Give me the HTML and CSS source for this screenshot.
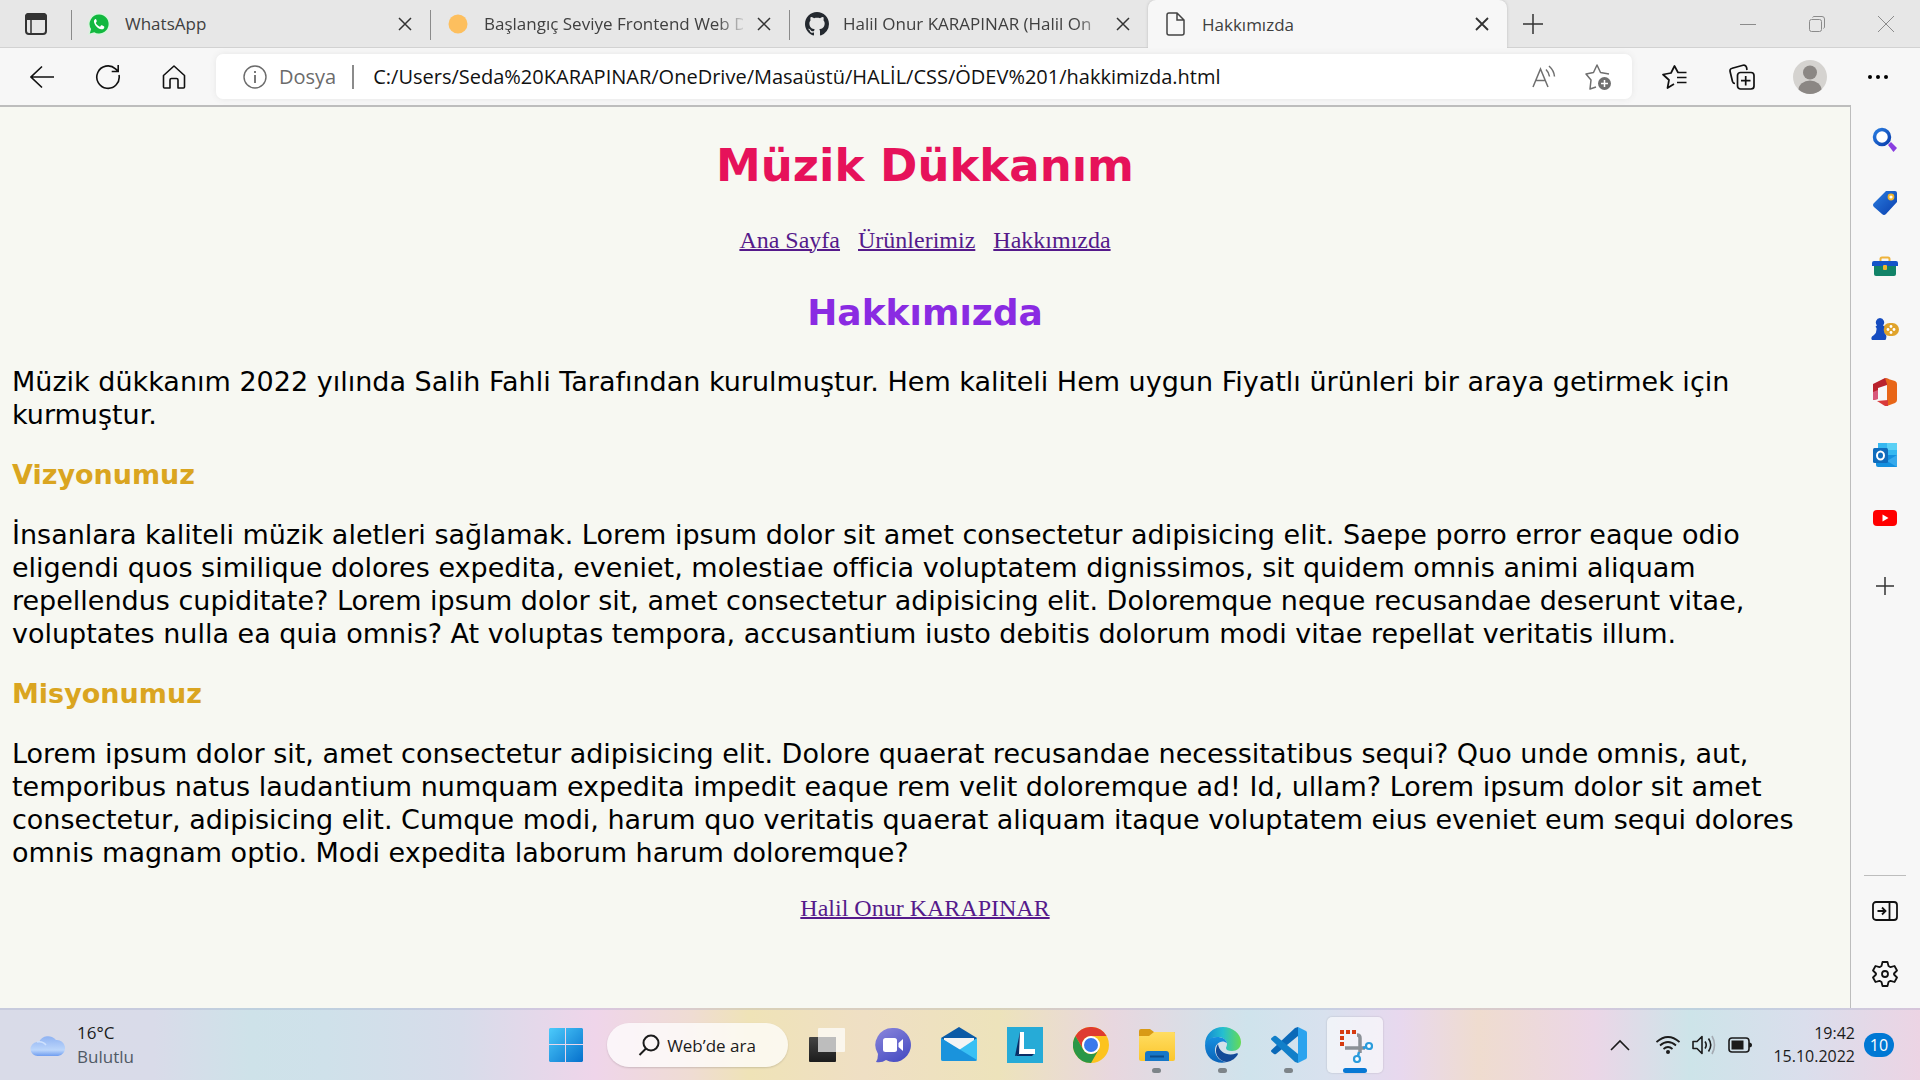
FILE: index.html
```html
<!DOCTYPE html>
<html lang="tr">
<head>
<meta charset="utf-8">
<title>Hakkımızda</title>
<link rel="stylesheet" href="styles.css">
</head>
<body>
<header class="tabbar">
  <button class="tab-actions" aria-label="Sekme eylemleri"><svg width="24" height="24" viewBox="0 0 24 24" fill="none" stroke="#333" stroke-width="2"><rect x="2" y="2" width="20" height="20" rx="3"/><path d="M2 5a3 3 0 0 1 3-3h14a3 3 0 0 1 3 3v2H2z" fill="#333"/><path d="M7 7v15" stroke-width="1.5"/></svg></button>
  <nav class="tabs" aria-label="Sekmeler">
    <div class="tab">
      <svg width="24" height="24" viewBox="0 0 24 24"><path d="M12 1a11 11 0 0 1 0 22c-2 0-4-.5-5.500-1.500L1 23l1.700-5.300A11 11 0 0 1 12 1z" fill="#d8f5dd"/><path d="M12.200 2.500a9.500 9.500 0 1 1-4.900 17.700L2.800 21.400l1.300-4.300A9.500 9.500 0 0 1 12.200 2.500z" fill="#12b83f"/><path d="M8.500 7c-1 .3-1.800 1.500-1.500 3 .7 3.500 4 6.800 7.300 7.300 1.500.2 2.700-.6 3-1.900.1-.6 0-.9-.5-1.200l-1.800-.9c-.5-.2-.8-.1-1.100.3l-.6.8c-.3.300-.6.300-1 .1-1.500-.7-2.700-1.800-3.400-3.200-.2-.4-.1-.6.200-.9l.5-.7c.2-.3.200-.6.100-.9L9.200 7.500c-.2-.4-.4-.5-.7-.5z" fill="#fff"/></svg>
      <button class="tab-title">WhatsApp</button>
      <button class="tab-close" aria-label="Kapat"><svg width="14" height="14" viewBox="0 0 14 14" stroke="#333" stroke-width="1.500"><path d="M1 1l12 12M13 1L1 13"/></svg></button>
    </div>
    <div class="tab">
      <svg width="24" height="24" viewBox="0 0 24 24"><circle cx="12" cy="12" r="9.500" fill="#fdbf5e"/></svg>
      <button class="tab-title tab-title-long">Başlangıç Seviye Frontend Web D</button>
      <button class="tab-close" aria-label="Kapat"><svg width="14" height="14" viewBox="0 0 14 14" stroke="#333" stroke-width="1.500"><path d="M1 1l12 12M13 1L1 13"/></svg></button>
    </div>
    <div class="tab">
      <svg width="24" height="24" viewBox="0 0 16 16"><path fill="#24292f" d="M8 0C3.580 0 0 3.580 0 8c0 3.540 2.290 6.530 5.470 7.590.4.070.55-.17.55-.38 0-.19-.01-.82-.01-1.490-2.010.37-2.530-.49-2.690-.94-.09-.23-.48-.94-.82-1.130-.28-.15-.68-.52-.01-.53.63-.01 1.080.58 1.230.82.72 1.210 1.870.87 2.330.66.070-.52.28-.87.51-1.070-1.780-.2-3.640-.89-3.640-3.950 0-.87.31-1.590.82-2.150-.08-.2-.36-1.020.08-2.120 0 0 .67-.21 2.200.82.640-.18 1.320-.27 2-.27s1.360.09 2 .27c1.530-1.040 2.200-.82 2.200-.82.44 1.100.16 1.920.08 2.120.51.56.82 1.270.82 2.150 0 3.070-1.870 3.750-3.650 3.950.29.25.54.73.54 1.480 0 1.070-.01 1.930-.01 2.200 0 .21.15.46.55.38A8.010 8.010 0 0 0 16 8c0-4.420-3.580-8-8-8z"/></svg>
      <button class="tab-title tab-title-long">Halil Onur KARAPINAR (Halil On</button>
      <button class="tab-close" aria-label="Kapat"><svg width="14" height="14" viewBox="0 0 14 14" stroke="#333" stroke-width="1.500"><path d="M1 1l12 12M13 1L1 13"/></svg></button>
    </div>
    <div class="tab tab-active">
      <svg width="24" height="24" viewBox="0 0 24 24" fill="none" stroke="#444" stroke-width="1.500"><path d="M5 1h8l7 7v13a2 2 0 0 1-2 2H5a2 2 0 0 1-2-2V3a2 2 0 0 1 2-2zM13 1v7h7"/></svg>
      <button class="tab-title">Hakkımızda</button>
      <button class="tab-close" aria-label="Kapat"><svg width="14" height="14" viewBox="0 0 14 14" stroke="#333" stroke-width="1.800"><path d="M1 1l12 12M13 1L1 13"/></svg></button>
    </div>
    <button class="new-tab" aria-label="Yeni sekme"><svg width="22" height="22" viewBox="0 0 22 22" stroke="#333" stroke-width="1.500"><path d="M11 1v20M1 11h20"/></svg></button>
  </nav>
  <div class="window-buttons">
    <button aria-label="Simge durumuna küçült"><svg width="16" height="16" viewBox="0 0 16 16" stroke="#8b8b8b"><path d="M0 8.500h16"/></svg></button>
    <button aria-label="Önceki boyut"><svg width="16" height="16" viewBox="0 0 16 16" fill="none" stroke="#8b8b8b"><rect x=".5" y="3.500" width="12" height="12" rx="2"/><path d="M3.500 1.500a2 2 0 0 1 1.500-1h8a2.500 2.500 0 0 1 2.500 2.500v8a2 2 0 0 1-1 1.500"/></svg></button>
    <button aria-label="Pencereyi kapat"><svg width="16" height="16" viewBox="0 0 16 16" stroke="#8b8b8b"><path d="M0 0l16 16M16 0L0 16"/></svg></button>
  </div>
</header>

<div class="toolbar">
  <button class="tool" aria-label="Geri"><svg width="24" height="24" viewBox="0 0 24 24" fill="none" stroke="#111" stroke-width="1.600"><path d="M24 12H1M12 1.500L1 12l11 10.500"/></svg></button>
  <button class="tool" aria-label="Yenile"><svg width="26" height="26" viewBox="0 0 26 26" fill="none" stroke="#111" stroke-width="1.600"><path d="M24 11a11.200 11.200 0 1 1-3.500-6.200L23 7.200M23.200 1v6.500h-6.500"/></svg></button>
  <button class="tool" aria-label="Giriş"><svg width="24" height="24" viewBox="0 0 24 24" fill="none" stroke="#111" stroke-width="1.600" stroke-linejoin="round"><path d="M1.500 10.500L12 1l10.500 9.500V22a1 1 0 0 1-1 1H16v-8a1.500 1.500 0 0 0-1.500-1.500h-5A1.500 1.500 0 0 0 8 15v8H2.500a1 1 0 0 1-1-1z"/></svg></button>
  <div class="address">
    <svg width="24" height="24" viewBox="0 0 24 24" fill="none" stroke="#6b6b6b" stroke-width="1.400"><circle cx="12" cy="12" r="11"/><path d="M12 10v8M12 6v2" stroke-width="1.800"/></svg>
    <label class="scheme" for="url">Dosya</label>
    <input class="url" id="url" type="text" value="C:/Users/Seda%20KARAPINAR/OneDrive/Masaüstü/HALİL/CSS/ÖDEV%201/hakkimizda.html">
    <button class="address-button" aria-label="Sesli oku"><svg width="24" height="24" viewBox="0 0 24 24" fill="none" stroke="#6f6f6f" stroke-width="1.500"><path d="M1 22L8.500 4 16 22M4 15.500h9M14 4.500q3 3 3.500 7M17 1q5 4.500 5.500 10.500"/></svg></button>
    <button class="address-button" aria-label="Sık kullanılanlara ekle"><svg width="26" height="26" viewBox="0 0 26 26" fill="none" stroke="#6f6f6f" stroke-width="1.500" stroke-linejoin="round"><path d="M11 23l-6 2 1-9-5-6 7.500-1.500L12 1l3.500 7.500L24 10"/><circle cx="19.500" cy="19.500" r="6.500" fill="#6f6f6f" stroke="none"/><path d="M19.500 16v7M16 19.500h7" stroke="#fff"/></svg></button>
  </div>
  <div class="toolbar-end">
    <button class="tool" aria-label="Sık kullanılanlar"><svg width="25" height="24" viewBox="0 0 25 24" fill="none" stroke="#111" stroke-width="1.700" stroke-linejoin="round"><path d="M12 19l-6.500 4L7 15 1 9.500 9 8l3.500-7L16 7.500h8.500M15 12.500h9.500M15 17.500h9.500"/></svg></button>
    <button class="tool" aria-label="Koleksiyonlar"><svg width="26" height="26" viewBox="0 0 26 26" fill="none" stroke="#111" stroke-width="1.700"><path d="M6 19.500c-1.500 0-2-.5-2.500-2L1.200 8c-.5-2 0-3.300 2-3.800L14 1.200c2-.5 3 .3 3.500 2L18 6"/><rect x="8.500" y="8.500" width="16.500" height="16.500" rx="3"/><path d="M16.700 12v9.500M12 16.700h9.500"/></svg></button>
    <button class="tool" aria-label="Profil"><svg width="34" height="34" viewBox="0 0 34 34"><circle cx="17" cy="17" r="17" fill="#d5d3d0"/><circle cx="17" cy="12.500" r="7" fill="#8b8784"/><path d="M5.500 29.500a11.500 9 0 0 1 23 0A17 17 0 0 1 5.500 29.500z" fill="#8b8784"/></svg></button>
    <button class="tool" aria-label="Ayarlar ve daha fazlası"><svg width="20" height="4" viewBox="0 0 20 4"><circle cx="2" cy="2" r="2"/><circle cx="10" cy="2" r="2"/><circle cx="18" cy="2" r="2"/></svg></button>
  </div>
</div>

<div class="workspace">
  <main class="page">
    <h1 class="site-title">Müzik Dükkanım</h1>
    <nav class="site-nav"><a href="#ana">Ana Sayfa</a><a href="#urunler">Ürünlerimiz</a><a href="#hakkimizda">Hakkımızda</a></nav>
    <h2 class="page-title">Hakkımızda</h2>
    <p>Müzik dükkanım 2022 yılında Salih Fahli Tarafından kurulmuştur. Hem kaliteli Hem uygun Fiyatlı ürünleri bir araya getirmek için kurmuştur.</p>
    <h3>Vizyonumuz</h3>
    <p>İnsanlara kaliteli müzik aletleri sağlamak. Lorem ipsum dolor sit amet consectetur adipisicing elit. Saepe porro error eaque odio eligendi quos similique dolores expedita, eveniet, molestiae officia voluptatem dignissimos, sit quidem omnis animi aliquam repellendus cupiditate? Lorem ipsum dolor sit, amet consectetur adipisicing elit. Doloremque neque recusandae deserunt vitae, voluptates nulla ea quia omnis? At voluptas tempora, accusantium iusto debitis dolorum modi vitae repellat veritatis illum.</p>
    <h3>Misyonumuz</h3>
    <p>Lorem ipsum dolor sit, amet consectetur adipisicing elit. Dolore quaerat recusandae necessitatibus sequi? Quo unde omnis, aut, temporibus natus laudantium numquam expedita impedit eaque rem velit doloremque ad! Id, ullam? Lorem ipsum dolor sit amet consectetur, adipisicing elit. Cumque modi, harum quo veritatis quaerat aliquam itaque voluptatem eius eveniet eum sequi dolores omnis magnam optio. Modi expedita laborum harum doloremque?</p>
    <footer class="site-footer"><a href="#yazar">Halil Onur KARAPINAR</a></footer>
  </main>

  <aside class="sidebar">
    <button aria-label="Ara"><svg width="26" height="26" viewBox="0 0 26 26"><defs><linearGradient id="lens" x2="1" y2="1"><stop stop-color="#2a7de0"/><stop offset="1" stop-color="#0a3fae"/></linearGradient></defs><path d="M16 18l3-3 6 6-3.500 4z" fill="#8a3ee0"/><circle cx="10" cy="10" r="7.500" fill="#fff" stroke="url(#lens)" stroke-width="3.500"/></svg></button>
    <button aria-label="Alışveriş"><svg width="26" height="26" viewBox="0 0 26 26"><path d="M14 1h9q2 0 2 2v9L14 24q-2 2-4 0l-8-7q-2-2 0-4z" fill="url(#lens)"/><circle cx="19" cy="7" r="2.500" fill="#fff" stroke="#f0b52f" stroke-width="1.800"/></svg></button>
    <button aria-label="Araçlar"><svg width="26" height="26" viewBox="0 0 26 26"><path d="M8.500 10V6q0-1.500 1.500-1.500h6q1.500 0 1.500 1.500v4" fill="none" stroke="#efb43c" stroke-width="2"/><path d="M2 11h22v10q0 2-2 2H4q-2 0-2-2z" fill="#128368"/><path d="M0 10q0-2 2-2h22q2 0 2 2v3H0z" fill="#1554c9"/><rect x="11" y="12" width="4" height="5" rx="1" fill="#f0b52f"/></svg></button>
    <button aria-label="Oyunlar"><svg width="28" height="24" viewBox="0 0 28 24"><rect x="12" y="6" width="16" height="13" rx="6.500" fill="#e0a32b"/><g fill="#fff"><circle cx="20" cy="9.500" r="1.400"/><circle cx="20" cy="15.500" r="1.400"/><circle cx="17" cy="12.500" r="1.400"/><circle cx="23" cy="12.500" r="1.400"/></g><path d="M9 1a4.500 4.500 0 0 1 3 7.500q2 .5 1 2.500-1 4 2 7 1 2-.5 5H1q-2-3 2-5 3-2 2.500-7-2-1.500.5-2.500A4.500 4.500 0 0 1 9 1z" fill="#164cc0"/></svg></button>
    <button aria-label="Office"><svg width="26" height="28" viewBox="0 0 26 28"><path d="M1 6L13 0l4 1-2 6-9 3v11l-5 1z" fill="#b9222c"/><path d="M1 14l5-2v9l-5 1z" fill="#d8587b"/><path d="M13 0l10 3q2 1 2 3v16q0 2-2 3l-8 3V6z" fill="#e86618"/><path d="M5 23l11-1v6h-3z" fill="#d93a3b"/></svg></button>
    <button aria-label="Outlook"><svg width="26" height="26" viewBox="0 0 26 26"><path d="M6 1h17q2 0 2 2v12H6z" fill="#35b8f1"/><path d="M15 1h10v7H15z" fill="#5bd0f5"/><path d="M4 13h21v12H6q-2 0-2-2z" fill="#1490df"/><path d="M25 13v12l-10-6z" fill="#36a9ec"/><rect x="1" y="6" width="15" height="15" rx="1.500" fill="#0f6cbd"/><ellipse cx="8.500" cy="13.500" rx="3.500" ry="4" fill="none" stroke="#fff" stroke-width="2"/></svg></button>
    <button aria-label="YouTube"><svg width="26" height="26" viewBox="0 0 26 26"><rect x="1" y="5" width="24" height="16" rx="4" fill="#f00"/><path d="M10.500 9.500v7l6-3.500z" fill="#fff"/></svg></button>
    <button class="sidebar-add" aria-label="Ekle"><svg width="20" height="20" viewBox="0 0 20 20" stroke="#333" stroke-width="1.500"><path d="M10 1v18M1 10h18"/></svg></button>
    <hr class="sidebar-rule">
    <button aria-label="Kenar çubuğunu gizle"><svg width="26" height="20" viewBox="0 0 26 20" fill="none" stroke="#111" stroke-width="1.800"><rect x="1" y="1" width="24" height="18" rx="3"/><path d="M17.500 1v18M5.500 10h8M10 6.500l3.500 3.500-3.500 3.500"/></svg></button>
    <button aria-label="Kenar çubuğu ayarları"><svg width="26" height="26" viewBox="0 0 26 26" fill="none" stroke="#111" stroke-width="1.800" stroke-linejoin="round"><path d="M10.500 1h5l1 4 2 1.200 4-1.200 2.500 4.500-3 3v1l3 3-2.500 4.500-4-1.200-2 1.200-1 4h-5l-1-4-2-1.200-4 1.200L1 16.500l3-3v-1l-3-3L3.500 5l4 1.200 2-1.200z"/><circle cx="13" cy="13" r="3"/></svg></button>
  </aside>
</div>

<footer class="taskbar">
  <button class="weather">
    <svg width="36" height="24" viewBox="0 0 36 24"><defs><linearGradient id="sky" x2="0" y2="1"><stop stop-color="#8fb2f2"/><stop offset=".7" stop-color="#bcd6fb"/><stop offset="1" stop-color="#6f9df0"/></linearGradient></defs><path d="M8 23a7 7 0 0 1-1-14h2a10 10 0 0 1 17-2 8 8 0 0 1 2 16z" fill="url(#sky)"/><path d="M7 9q6-1 9 3" fill="none" stroke="#cfe1fd" stroke-width="1.500"/></svg>
    <span class="weather-text"><span class="degrees">16°C</span><span class="condition">Bulutlu</span></span>
  </button>
  <nav class="apps" aria-label="Görev çubuğu">
    <button class="app" aria-label="Başlat"><svg width="36" height="36" viewBox="0 0 36 36"><defs><linearGradient id="win" x2="1" y2="1"><stop stop-color="#4ccbfb"/><stop offset="1" stop-color="#0670cc"/></linearGradient></defs><path d="M2 1h15v16H1V2zM18 1h16l1 1v15H18zM1 18h16v17H2l-1-1zM18 18h17v16l-1 1H18z" fill="url(#win)"/></svg></button>
    <button class="search"><svg width="22" height="22" viewBox="0 0 22 22" fill="none" stroke="#1b1b1b" stroke-width="2"><circle cx="13" cy="9" r="7.500"/><path d="M8 14.500L1.500 21"/></svg>Web’de ara</button>
    <button class="app" aria-label="Görev görünümü"><svg width="36" height="36" viewBox="0 0 36 36"><defs><linearGradient id="dark" x2="0" y2="1"><stop stop-color="#444"/><stop offset="1" stop-color="#1c1c1c"/></linearGradient></defs><rect y="10" width="27" height="25" rx="1" fill="url(#dark)"/><rect x="9" y="1" width="27" height="24" rx="1" fill="#fff" fill-opacity=".7"/><path d="M9 10h18v15H9z" fill="#bdbdbd"/></svg></button>
    <button class="app" aria-label="Sohbet"><svg width="36" height="36" viewBox="0 0 36 36"><defs><linearGradient id="chat" x2=".6" y2="1"><stop stop-color="#8b87dc"/><stop offset="1" stop-color="#4b50c4"/></linearGradient></defs><path d="M18 1a17 17 0 1 1-7 32q-4 3-10 2 2-3 2-8A17 17 0 0 1 18 1z" fill="url(#chat)"/><rect x="8" y="11" width="14" height="14" rx="2.500" fill="#fff"/><path d="M23.500 16l4.500-4v12l-4.500-4z" fill="#fff"/></svg></button>
    <button class="app" aria-label="Posta"><svg width="36" height="36" viewBox="0 0 36 36"><path d="M0 11L18 0l18 11v8H0z" fill="#0b5aa6"/><path d="M3 11h30v12H3z" fill="#f4f4f4"/><path d="M0 11l18 12 18-12v21q0 2-2 2H2q-2 0-2-2z" fill="#39c0f4"/><path d="M0 11l36 22q-1 1-2 1H2q-2 0-2-2z" fill="#1a93dc"/></svg></button>
    <button class="app" aria-label="L"><svg width="36" height="36" viewBox="0 0 36 36"><path d="M0 0h36v36H0z" fill="#26abd7"/><path d="M13 5v22l-5 2z" fill="#0a2d66"/><path d="M13 27h14l-2 2H8z" fill="#0a2d66"/><path d="M13 5h4v17h11v5H12z" fill="#fff"/></svg></button>
    <button class="app" aria-label="Chrome"><svg width="36" height="36" viewBox="0 0 36 36"><circle cx="18" cy="18" r="18" fill="#fcc31e"/><path d="M2.400 9A18 18 0 0 1 33.600 9H18a9 9 0 0 0-7.800 13.500z" fill="#df3b30"/><path d="M2.400 9A18 18 0 0 0 18 36l7.800-13.500A9 9 0 0 1 10.200 22.500z" fill="#2a9746"/><circle cx="18" cy="18" r="9" fill="#fff"/><circle cx="18" cy="18" r="7" fill="#3979ec"/></svg></button>
    <button class="app app-running" aria-label="Dosya Gezgini"><svg width="36" height="36" viewBox="0 0 36 36"><defs><linearGradient id="folder" x2="0" y2="1"><stop stop-color="#ffdd62"/><stop offset="1" stop-color="#fbc62c"/></linearGradient></defs><path d="M0 4q0-2 2-2h9l4 3h20l1 1v5H0z" fill="#d99a16"/><path d="M0 9h10l5-4h20l1 1v26q0 2-2 2H2q-2 0-2-2z" fill="url(#folder)"/><path d="M6 34V27q0-3 3-3h18q3 0 3 3v7z" fill="#1677c8"/><path d="M11 29.500h14" stroke="#0b4c8b" stroke-width="2"/></svg></button>
    <button class="app app-running" aria-label="Edge"><svg width="36" height="36" viewBox="0 0 36 36"><defs><linearGradient id="edge-top" x1="0" x2="1"><stop stop-color="#1487d4"/><stop offset=".5" stop-color="#25bfd0"/><stop offset="1" stop-color="#65db55"/></linearGradient><linearGradient id="edge-side" x2="0" y2="1"><stop stop-color="#168fe0"/><stop offset="1" stop-color="#0b63b8"/></linearGradient></defs><path d="M0 18C0 7 8 0 18 0s18 7 18 15c0 6-4 9-9 9-4 0-6-1-6-3 0-1 1-2 1-4 0-4-4-7-9-7C7 10 2 13 0 18z" fill="url(#edge-top)"/><path d="M0 18c1-5 6-8 12-8 5 0 9 2 10 6-5-4-12 0-12 7 0 7 6 12 12 12C12 38 0 32 0 18z" fill="url(#edge-side)"/><path d="M13 17c-5 8 0 17 9 18 5-1 9-4 11-8 0-1-1-1-2-.5-8 3-17-1-18-9.500z" fill="#134a98"/></svg></button>
    <button class="app app-running" aria-label="Visual Studio Code"><svg width="36" height="36" viewBox="0 0 36 36"><path d="M27 9L5 27q-1 .5-2 0l-2.500-2q-1-1 0-2L24 1l3-1z" fill="#0b69b8"/><path d="M27 27L5 9q-1-.5-2 0L.5 11q-1 1 0 2L24 35l3 1z" fill="#127fc9"/><path d="M27 0l8 4q1 .5 1 2v24q0 1.500-1 2l-8 4z" fill="#2ba3ee"/></svg></button>
    <button class="app app-active app-running" aria-label="Ekran Alıntısı Aracı"><svg width="36" height="36" viewBox="0 0 36 36"><path d="M3 5h17M5 3v17" fill="none" stroke="#d63a10" stroke-width="4" stroke-dasharray="4 2"/><path d="M20 8q3 0 3 3v15M8 21h20" fill="none" stroke="#8b9096" stroke-width="3.500"/><circle cx="32" cy="19" r="3" fill="#fff" stroke="#2a9bdc" stroke-width="2.200"/><circle cx="20" cy="32" r="3" fill="#fff" stroke="#2a9bdc" stroke-width="2.200"/><path d="M26 21l4-1M22 25l-1 4" stroke="#2a9bdc" stroke-width="2.500"/></svg></button>
  </nav>
  <div class="tray">
    <button class="tray-more" aria-label="Gizli simgeler"><svg width="20" height="12" viewBox="0 0 20 12" fill="none" stroke="#1b1b1b" stroke-width="1.600"><path d="M1 11l9-9 9 9"/></svg></button>
    <button class="tray-status" aria-label="Ağ, ses ve pil">
      <svg width="24" height="20" viewBox="0 0 24 20" fill="none" stroke="#1b1b1b" stroke-width="1.700"><path d="M.5 7q11.500-10 23 0M4 10.500q8-7 16 0M7.500 14q4.500-4 9 0"/><circle cx="12" cy="17" r="2" fill="#1b1b1b" stroke="none"/></svg>
      <svg width="24" height="20" viewBox="0 0 24 20" fill="none" stroke="#1b1b1b" stroke-width="1.600" stroke-linejoin="round"><path d="M1 6.500h4l5-5v17l-5-5H1zM13 6.500q2.500 3.500 0 7M16.500 3.500q4.500 6.500 0 13"/><path d="M20 1q5 9 0 18" stroke="#a5abb3"/></svg>
      <svg width="24" height="20" viewBox="0 0 24 20" fill="none" stroke="#1b1b1b" stroke-width="1.600"><rect x="1" y="3" width="20" height="14" rx="3"/><path d="M3.500 5.500h12v9h-12z" fill="#1b1b1b" stroke="none"/><path d="M21 7.500q3 0 3 2.500t-3 2.500z" fill="#1b1b1b" stroke="none"/></svg>
    </button>
    <button class="clock"><time>19:42</time><time>15.10.2022</time></button>
    <button class="badge" aria-label="10 bildirim">10</button>
  </div>
</footer>
</body>
</html>
```
FILE: styles.css
```css
* { box-sizing: border-box; }
body {
  margin: 0;
  min-height: 100vh;
  display: flex;
  flex-direction: column;
  background: #f7f7f7;
  font-family: "Open Sans", "Noto Sans", sans-serif;
  font-size: 17px;
  color: #1b1b1b;
}
button {
  margin: 0;
  padding: 0;
  border: 0;
  background: none;
  color: inherit;
  font: inherit;
  display: flex;
  align-items: center;
  justify-content: center;
  flex: none;
}
svg { display: block; flex: none; }

/* Tab strip */
.tabbar {
  display: flex;
  height: 48px;
  background: #e7e7e7;
  border-bottom: 1px solid #d2d2d2;
}
.tab-actions { width: 71px; }
.tabs { flex: 1; min-width: 0; display: flex; }
.tab {
  flex: 0 1 359px;
  min-width: 0;
  display: flex;
  align-items: center;
  gap: 14px;
  padding: 0 18px 0 16px;
  background: linear-gradient(#8b8b8b, #8b8b8b) 0 10px / 1px 30px no-repeat;
}
.tab-title {
  flex: 1;
  min-width: 0;
  overflow: hidden;
  white-space: nowrap;
  justify-content: flex-start;
  color: #404040;
}
.tab-title-long { mask-image: linear-gradient(to right, #000 90%, rgb(0 0 0 / 15%)); }
.tab-close { width: 14px; }
.tab-active {
  height: 48px;
  background: #f7f7f7;
  border-radius: 8px 8px 0 0;
  box-shadow: 0 0 3px #bbb;
  clip-path: inset(0 -4px 0 -4px);
}
.new-tab { width: 52px; }
.window-buttons { display: flex; }
.window-buttons button { width: 69px; }

/* Address row */
.toolbar {
  display: flex;
  align-items: center;
  height: 57px;
  padding-left: 9px;
}
.tool { width: 66px; height: 44px; }
.address {
  flex: 1;
  min-width: 0;
  height: 45px;
  margin-left: 9px;
  padding: 0 7px 0 27px;
  display: flex;
  align-items: center;
  background: #fff;
  border-radius: 7px;
  box-shadow: 0 0 6px #e6e6e6;
  font-size: 20px;
}
.scheme {
  margin-left: 12px;
  padding-right: 16px;
  border-right: 2px solid #8b8b8b;
  line-height: 24px;
  color: #6b6b6b;
}
.url {
  flex: 1;
  min-width: 0;
  padding: 0 0 0 19px;
  border: 0;
  outline: 0;
  background: none;
  color: #111;
  font: inherit;
}
.address-button { width: 54px; height: 40px; }
.toolbar-end { display: flex; padding: 0 8px; }
.toolbar-end .tool { width: 68px; }

/* Document and side panel */
.workspace { flex: 1; display: flex; }
.page {
  flex: 1;
  min-width: 0;
  padding: 31px 12px;
  border-top: 2px solid #bdbdbd;
  border-right: 1px solid #bdbdbd;
  background: #f7f8f2;
  color: #000;
  font-family: Verdana, "DejaVu Sans", sans-serif;
  font-size: 27px;
  font-variant-ligatures: none;
  line-height: 33px;
}
.page h1, .page h2, .page h3, .page p { margin: 0; }
.page h3, .page h3 + p { margin-top: 27px; }
.page h3 { color: #daa520; font-size: 27px; }
.page .site-title {
  text-align: center;
  color: #e6125a;
  font-size: 45px;
  line-height: 56px;
}
.site-nav {
  display: flex;
  justify-content: center;
  gap: 18px;
  margin-top: 32px;
}
.site-nav, .site-footer {
  font-family: "Liberation Serif", serif;
  font-size: 24px;
  line-height: 28px;
}
.page a { color: #551a8b; text-decoration-thickness: 2px; }
.page .page-title {
  margin: 37px 0 30px;
  text-align: center;
  color: #8a2be2;
  font-size: 36px;
  line-height: 44px;
}
.site-footer { margin-top: 25px; text-align: center; }

.sidebar {
  flex: none;
  width: 69px;
  display: flex;
  flex-direction: column;
  padding: 3px 1px 3px 0;
}
.sidebar button { height: 63px; }
.sidebar .sidebar-add { height: 73px; }
.sidebar-rule {
  width: 42px;
  margin: auto auto 3px;
  border: 0;
  border-top: 1px solid #bdbdbd;
}

/* Taskbar */
.taskbar {
  display: grid;
  grid-template-columns: 1fr auto 1fr;
  height: 72px;
  border-top: 2px solid rgb(130 140 180 / 20%);
  background: linear-gradient(90deg, #d9dbe8 0%, #d9dbe9 8%, #cee2e9 13%, #cfe1ea 17%, #d7dcea 24%, #efd5ea 31%, #efdcd3 36%, #efe3b7 39%, #efdfc4 45%, #ede3bb 52%, #e8d7df 58%, #cfe3ec 65%, #d8e1ee 69%, #e8d8ee 73%, #efdccf 77%, #ebd6e7 83%, #cde4e9 88%, #dadeec 94%, #ecd4e4 100%);
}
.weather { justify-self: start; gap: 11px; padding-left: 30px; }
.weather-text { display: flex; flex-direction: column; text-align: left; line-height: 24px; }
.condition { color: #505965; }
.apps { display: flex; align-items: center; }
.app { position: relative; width: 66px; height: 56px; }
.search {
  width: 181px;
  height: 44px;
  margin: 0 6px 0 8px;
  gap: 7px;
  border-radius: 22px;
  background: rgb(255 255 255 / 75%);
  box-shadow: 0 1px 2px rgb(0 0 0 / 15%);
}
.app-active {
  width: 56px;
  margin: 0 5px;
  border-radius: 5px;
  background: rgb(255 255 255 / 60%);
  box-shadow: 0 0 2px rgb(0 0 0 / 20%);
}
.app-running::after {
  content: "";
  position: absolute;
  bottom: 0;
  left: calc(50% - 5px);
  width: 9px;
  height: 5px;
  border-radius: 3px;
  background: #7d8489;
}
.app-active::after { left: calc(50% - 12px); width: 24px; background: #0878d4; }
.tray {
  display: flex;
  align-items: center;
  justify-content: flex-end;
  padding-right: 26px;
  font-size: 16px;
}
.tray-more { width: 20px; margin-right: 26px; }
.tray-status { gap: 12px; }
.clock {
  flex-direction: column;
  align-items: flex-end;
  width: 103px;
  line-height: 23px;
}
.badge {
  width: 30px;
  height: 24px;
  margin-left: 9px;
  border-radius: 12px;
  background: #0078d4;
  color: #fff;
}
```
